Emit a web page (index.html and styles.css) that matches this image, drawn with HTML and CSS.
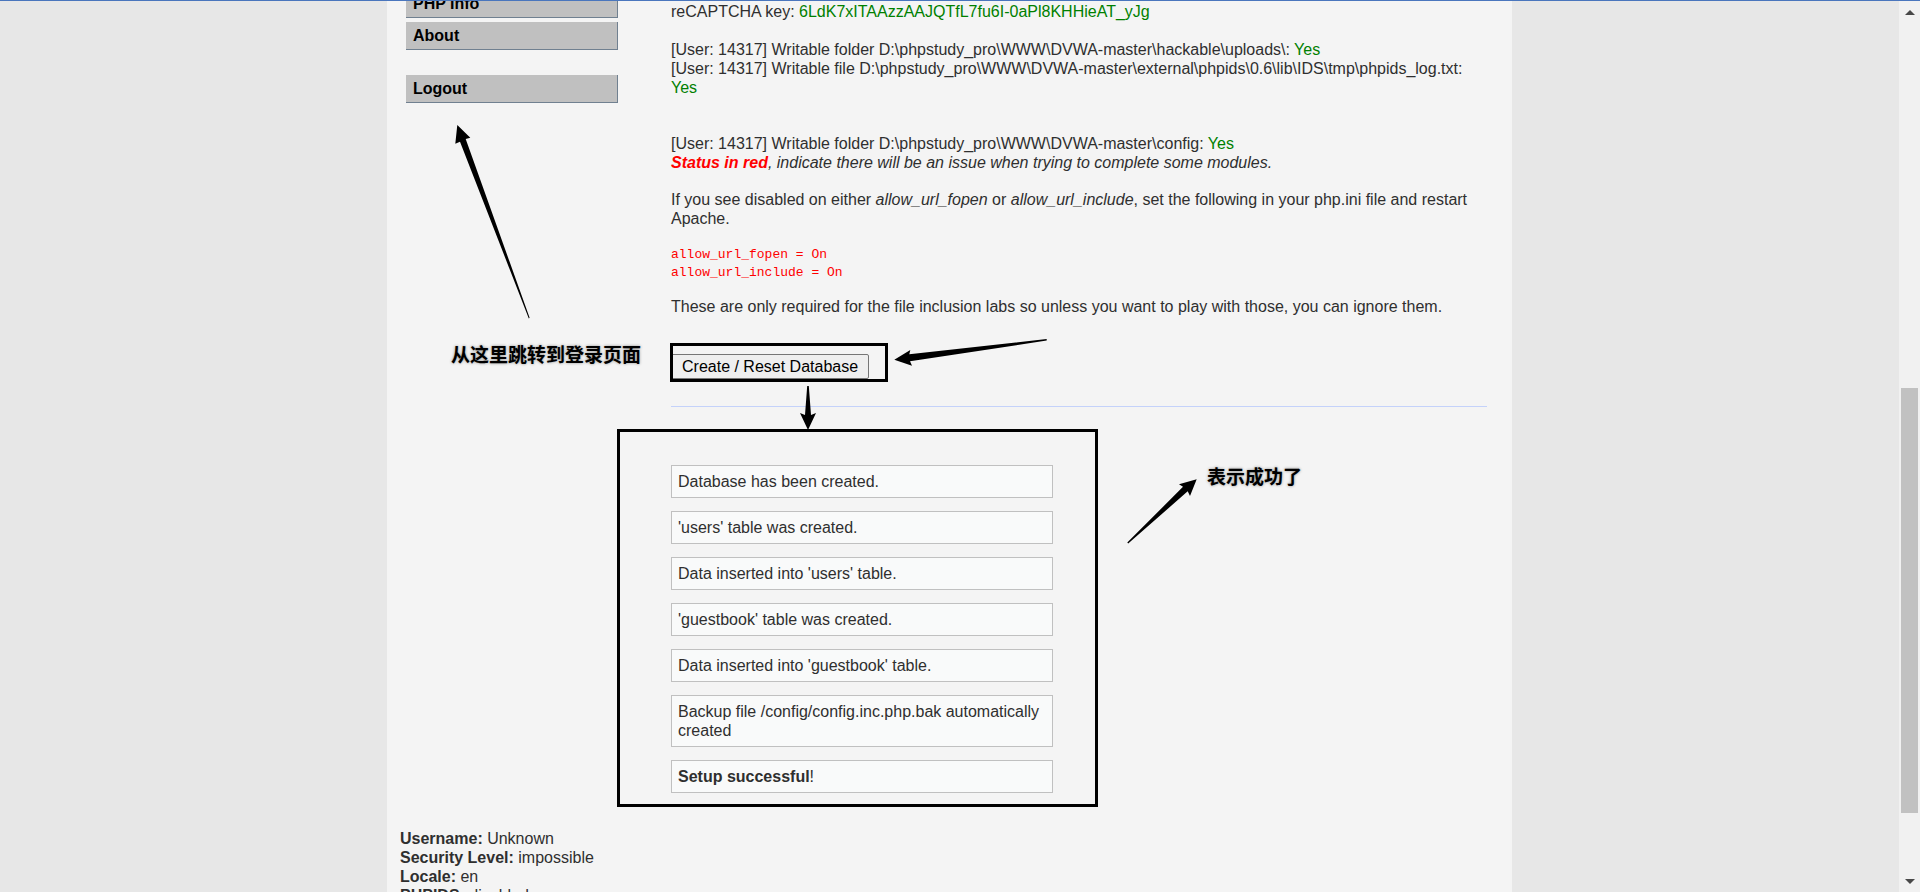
FILE: index.html
```html
<!DOCTYPE html>
<html lang="en">
<head>
<meta charset="utf-8">
<title>Setup :: Damn Vulnerable Web Application (DVWA)</title>
<link rel="stylesheet" href="styles.css">
</head>
<body>
<div class="viewport">
  <div class="container">
    <div class="columns">
      <nav class="menu">
        <ul class="menu-group">
          <li><a class="menu-link" href="#phpinfo">PHP Info</a></li>
          <li><a class="menu-link" href="#about">About</a></li>
        </ul>
        <ul class="menu-group">
          <li><a class="menu-link" href="#logout">Logout</a></li>
        </ul>
      </nav>
      <main class="main">
        <p class="recaptcha">reCAPTCHA key: <span class="success">6LdK7xITAAzzAAJQTfL7fu6I-0aPl8KHHieAT_yJg</span></p>
        <p class="writable">[User: 14317] Writable folder D:\phpstudy_pro\WWW\DVWA-master\hackable\uploads\: <span class="success">Yes</span><br>
        [User: 14317] Writable file D:\phpstudy_pro\WWW\DVWA-master\external\phpids\0.6\lib\IDS\tmp\phpids_log.txt:<br><span class="success">Yes</span></p>
        <p class="config">[User: 14317] Writable folder D:\phpstudy_pro\WWW\DVWA-master\config: <span class="success">Yes</span><br>
        <i><b class="failure">Status in red</b>, indicate there will be an issue when trying to complete some modules.</i></p>
        <p class="advice">If you see disabled on either <i>allow_url_fopen</i> or <i>allow_url_include</i>, set the following in your php.ini file and restart Apache.</p>
        <pre class="ini">allow_url_fopen = On
allow_url_include = On</pre>
        <p class="note">These are only required for the file inclusion labs so unless you want to play with those, you can ignore them.</p>
        <form class="setup-form">
          <button class="setup-button" type="button">Create / Reset Database</button>
          <span class="frame frame-button"></span>
        </form>
        <hr class="rule">
        <section class="results">
          <div class="message">Database has been created.</div>
          <div class="message">'users' table was created.</div>
          <div class="message">Data inserted into 'users' table.</div>
          <div class="message">'guestbook' table was created.</div>
          <div class="message">Data inserted into 'guestbook' table.</div>
          <div class="message">Backup file /config/config.inc.php.bak automatically created</div>
          <div class="message"><b>Setup successful</b>!</div>
          <span class="frame frame-results"></span>
        </section>
      </main>
    </div>
    <footer class="system-info">
      <b>Username:</b> Unknown<br>
      <b>Security Level:</b> impossible<br>
      <b>Locale:</b> en<br>
      <b>PHPIDS:</b> disabled
    </footer>
    <svg class="arrows" width="1125" height="560" viewBox="387 1 1125 560" aria-hidden="true">
      <path d="M457.3 125L470.3 137.8L465.7 139L529.6 317.8L528.8 318.4L460 141.8L455.3 143.8Z"/>
      <path d="M894.3 359.7L910.3 350L909.3 354.3L1046.7 339L1046.7 340.6L910 361.3L912 365.7Z"/>
      <path d="M808 430L800 413L805 415L807.2 386L808.8 386L811 415L816 413Z"/>
      <path d="M1196.7 479.2L1179 484.3L1183 486.8L1127.3 542.6L1128.2 543.6L1187.7 491.3L1190 496Z"/>
    </svg>
    <span class="label label-login" lang="zh">从这里跳转到登录页面</span>
    <span class="label label-success" lang="zh">表示成功了</span>
  </div>
</div>
<div class="scrollbar" aria-hidden="true">
  <svg class="scroll-arrow" width="10" height="5" viewBox="0 0 10 5"><path d="M0 5L5 0L10 5Z"/></svg>
  <div class="scroll-track"><div class="scroll-thumb"></div></div>
  <svg class="scroll-arrow" width="10" height="5" viewBox="0 0 10 5"><path d="M0 0L5 5L10 0Z"/></svg>
</div>
</body>
</html>
```
FILE: styles.css
```css
* { box-sizing: border-box; }

body {
  display: flex;
  height: 100vh;
  margin: 0;
  overflow: hidden;
  border-top: 1px solid #4a76bd;
  background: #e7e7e7;
  color: #2f2f2f;
  font: 16px/19px "Liberation Sans", Arial, sans-serif;
}

.viewport {
  flex: 1;
  min-width: 0;
  overflow: hidden;
}

.container {
  position: relative;
  max-width: 1125px;
  min-height: 100%;
  margin: 0 auto;
  background: #f4f4f4;
}

.columns {
  display: flex;
  gap: 53px;
  padding: 0 25px 0 19px;
}

/* Side menu */
.menu {
  flex: 0 0 212px;
  margin-top: -11px;
}

.menu-group {
  display: flex;
  flex-direction: column;
  gap: 4px;
  margin: 0 0 25px;
  padding: 0;
  list-style: none;
}

.menu-link {
  display: block;
  padding: 4px 7px;
  border: solid #708090;
  border-width: 0 1px 1px 0;
  background: #c0c0c0;
  color: #000;
  font-weight: bold;
  text-decoration: none;
}

/* Main column */
.main {
  flex: 1;
  min-width: 0;
  padding-top: 1px;
}

.main p { margin: 0; }
.main .writable { margin-top: 19px; }
.main .config { margin-top: 37px; }
.main .advice { margin-top: 18px; }
.main .note { margin-top: 15px; }

.success { color: #008000; }
.failure { color: #f00; }

.ini {
  margin: 18px 0 0;
  color: #f00;
  font: 13px/18px "Liberation Mono", monospace;
}

.setup-form {
  position: relative;
  display: flex;
  margin-top: 38px;
}

.setup-button {
  height: 25px;
  padding: 0 10px;
  border: 1px solid #767676;
  border-radius: 2px;
  background: #efefef;
  color: #000;
  font: inherit;
}

.rule {
  height: 1px;
  margin: 27px 0 58px;
  border: 0;
  background: #c4d2fa;
}

.results {
  position: relative;
  display: flex;
  flex-direction: column;
  gap: 13px;
  width: 382px;
}

.message {
  padding: 6px;
  border: 1px solid #c0c0c0;
  background: #f9fafa;
}

.system-info { padding: 36px 13px 0; }

/* Annotations drawn over the page */
.frame {
  position: absolute;
  border: 3px solid #000;
  pointer-events: none;
}

.frame-button {
  top: -11px;
  left: -1px;
  width: 218px;
  height: 39px;
}

.frame-results { inset: -36px -45px -14px -54px; }

.arrows {
  position: absolute;
  top: 0;
  left: 0;
  pointer-events: none;
}

.label {
  position: absolute;
  color: #000;
  font: bold 19px/28px "Noto Sans CJK SC", sans-serif;
  text-shadow: 0 0 3px #888;
  white-space: nowrap;
}

.label-login { top: 339px; left: 64px; }
.label-success { top: 461px; left: 820px; }

/* Scrollbar */
.scrollbar {
  display: flex;
  flex: 0 0 21px;
  flex-direction: column;
  align-items: center;
  padding: 9px 0 8px;
  background: #f1f1f1;
}

.scroll-arrow { fill: #484848; }

.scroll-track {
  display: flex;
  flex: 1;
  flex-direction: column;
  align-items: center;
  width: 100%;
  padding: 373px 0 66px;
}

.scroll-thumb {
  flex: 1;
  width: 17px;
  background: #c1c1c1;
}
```
